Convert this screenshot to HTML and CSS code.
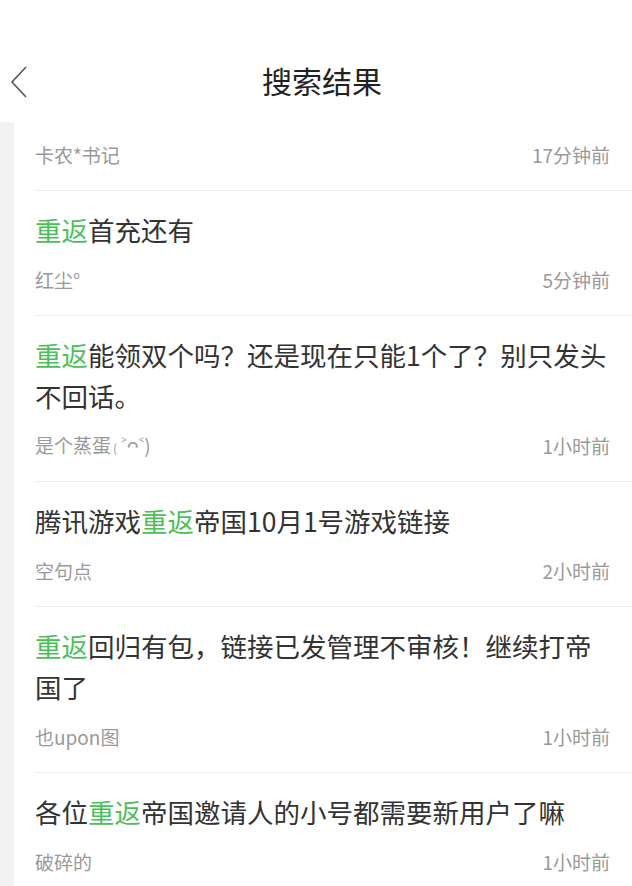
FILE: index.html
```html
<!DOCTYPE html>
<html lang="zh-CN">
<head>
    <meta charset="UTF-8">
    <meta name="viewport" content="width=device-width, initial-scale=1.0">
    <title>搜索结果</title>
    <link rel="stylesheet" href="styles.css">
</head>
<body>
    <!-- 顶部导航 -->
    <div class="nav">
        <a class="back" href="#" aria-label="返回">
            <svg width="18" height="34" viewBox="0 0 18 34">
                <polyline points="16,2 2,17 16,32" fill="none" stroke="#555" stroke-width="1.6"/>
            </svg>
        </a>
        <h1 class="nav-title">搜索结果</h1>
    </div>

    <!-- 结果列表 -->
    <div class="page">
        <div class="side"></div>
        <ul class="list">
            <li class="item">
                <div class="meta"><span>卡农*书记</span><span>17分钟前</span></div>
            </li>
            <li class="item">
                <div class="title"><span class="hl">重返</span>首充还有</div>
                <div class="meta"><span>红尘°</span><span>5分钟前</span></div>
            </li>
            <li class="item">
                <div class="title"><span class="hl">重返</span>能领双个吗？还是现在只能1个了？别只发头不回话。</div>
                <div class="meta"><span>是个蒸蛋<small>(</small> ˃ᴖ˂)</span><span>1小时前</span></div>
            </li>
            <li class="item">
                <div class="title">腾讯游戏<span class="hl">重返</span>帝国10月1号游戏链接</div>
                <div class="meta"><span>空句点</span><span>2小时前</span></div>
            </li>
            <li class="item">
                <div class="title"><span class="hl">重返</span>回归有包，链接已发管理不审核！继续打帝国了</div>
                <div class="meta"><span>也upon图</span><span>1小时前</span></div>
            </li>
            <li class="item">
                <div class="title">各位<span class="hl">重返</span>帝国邀请人的小号都需要新用户了嘛</div>
                <div class="meta"><span>破碎的</span><span>1小时前</span></div>
            </li>
        </ul>
    </div>
</body>
</html>
```

FILE: styles.css
```css
html, body {
    margin: 0;
    padding: 0;
}
body {
    font-family: "Noto Sans CJK SC", "Noto Sans", sans-serif;
    background: #fff;
    color: #333;
    width: 632px;
    overflow: hidden;
}
.nav {
    position: relative;
    height: 82px;
    padding-top: 40px;
    display: flex;
    align-items: center;
    justify-content: center;
}
.back {
    position: absolute; /* 浮在导航栏左侧 */
    left: 10px;
    top: 65px;
    display: block;
    line-height: 0;
}
.nav-title {
    margin: -2px 0 0 12px;
    font-size: 30px;
    font-weight: normal;
    color: #222;
}
.page {
    display: flex;
}
.side {
    width: 14px;
    flex: none;
    background: #f2f2f2;
}
.list {
    flex: 1;
    list-style: none;
    margin: 0;
    padding: 0 0 0 21px;
}
.item {
    padding: 18px 22px 22px 0;
    border-bottom: 1px solid #eee;
}
.item:first-child {
    padding-top: 20px;
}
.title {
    font-size: 26.5px;
    line-height: 41px;
    color: #333;
    margin-bottom: 17px;
}
.hl {
    color: #4cbf5a;
}
.meta {
    display: flex;
    justify-content: space-between;
    align-items: center;
    height: 26px;
    font-size: 19px;
    line-height: 26px;
    color: #999;
}
.meta small {
    font-size: 12px;
    margin-left: 2px;
}
```
